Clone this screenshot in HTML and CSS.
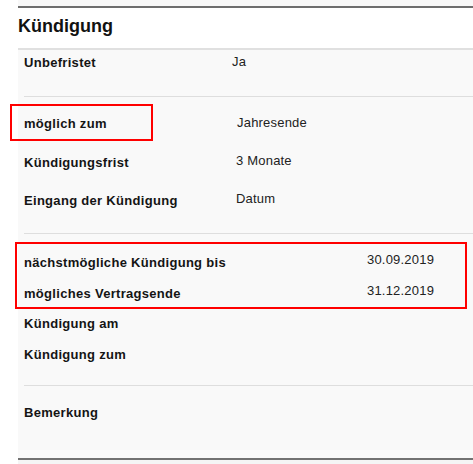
FILE: index.html
```html
<!DOCTYPE html>
<html lang="de">
<head>
<meta charset="utf-8">
<title>Kündigung</title>
<link rel="stylesheet" href="styles.css">
</head>
<body>
<div class="card">
  <div class="panel-head"><h2 class="title">Kündigung</h2></div>
  <div class="panel-body">
    <section class="group g1">
      <div class="row"><div class="label">Unbefristet</div><div class="value v-up1">Ja</div></div>
    </section>
    <section class="group g2">
      <div class="row"><div class="label">möglich zum</div><div class="value v-up1 v-in5">Jahresende</div></div>
      <div class="row"><div class="label">Kündigungsfrist</div><div class="value v-up2 v-in4">3 Monate</div></div>
      <div class="row"><div class="label">Eingang der Kündigung</div><div class="value v-up2 v-in4">Datum</div></div>
    </section>
    <section class="group g3">
      <div class="row"><div class="label">nächstmögliche Kündigung bis</div><div class="value v-up3 v-date">30.09.2019</div></div>
      <div class="row"><div class="label">mögliches Vertragsende</div><div class="value v-up3 v-date">31.12.2019</div></div>
      <div class="row"><div class="label">Kündigung am</div><div class="value"></div></div>
      <div class="row"><div class="label">Kündigung zum</div><div class="value"></div></div>
    </section>
    <section class="group g4">
      <div class="row"><div class="label">Bemerkung</div><div class="value"></div></div>
    </section>
  </div>
  <div class="panel-foot"></div>
  <div class="mark mark-1"></div>
  <div class="mark mark-2"></div>
</div>
</body>
</html>
```

FILE: styles.css
```css
html, body {
  margin: 0;
  padding: 0;
  background: #ffffff;
}
body {
  font-family: "Liberation Sans", Arial, sans-serif;
  color: #1a1a1a;
  width: 473px;
  height: 464px;
  overflow: hidden;
}
.card {
  position: relative;
  margin-left: 18px;
  padding-top: 6px;
  background: #f8f8f8;
  height: 458px;
}
.panel-head {
  border-top: 2px solid #6e6e6e;
  border-bottom: 2px solid #e0e0e0;
  background: #ffffff;
  height: 40px;
  box-sizing: content-box;
}
.title {
  margin: 0;
  padding-top: 8px;
  font-size: 18px;
  line-height: 20px;
  font-weight: bold;
  color: #111111;
}
.panel-body {
  background: #f9f9f9;
  padding-left: 6px;
}
.group {
  box-sizing: border-box;
  border-bottom: 1px solid #dedede;
}
.group.g4 {
  border-bottom: none;
}
.g1 { height: 47px; padding-top: 5px; }
.g2 { height: 137px; padding-top: 19px; }
.g3 { height: 152px; padding-top: 21px; }
.g4 { height: 72px; padding-top: 19px; }
.row {
  display: flex;
  align-items: flex-start;
  font-size: 13px;
  line-height: 15px;
}
.g2 .row { height: 38px; }
.g2 .row:first-child { height: 39px; }
.g3 .row { height: 30.7px; }
.label {
  width: 208px;
  flex: none;
  font-weight: bold;
  color: #141414;
  letter-spacing: 0.3px;
}
.value {
  color: #222222;
  letter-spacing: 0.2px;
}
.v-up1 { margin-top: -1px; }
.v-up2 { margin-top: -2px; }
.v-up3 { margin-top: -3px; }
.v-in4 { padding-left: 4px; }
.v-in5 { padding-left: 5px; }
.v-date { padding-left: 135px; }
.panel-foot {
  border-top: 2px solid #727272;
  background: #f5f5f5;
  height: 10px;
}
.mark {
  position: absolute;
  box-sizing: border-box;
  border: 2px solid #ff0000;
}
.mark-1 {
  left: -8px;
  top: 104px;
  width: 143px;
  height: 37px;
}
.mark-2 {
  left: -3px;
  top: 242px;
  width: 452px;
  height: 67px;
}
```
